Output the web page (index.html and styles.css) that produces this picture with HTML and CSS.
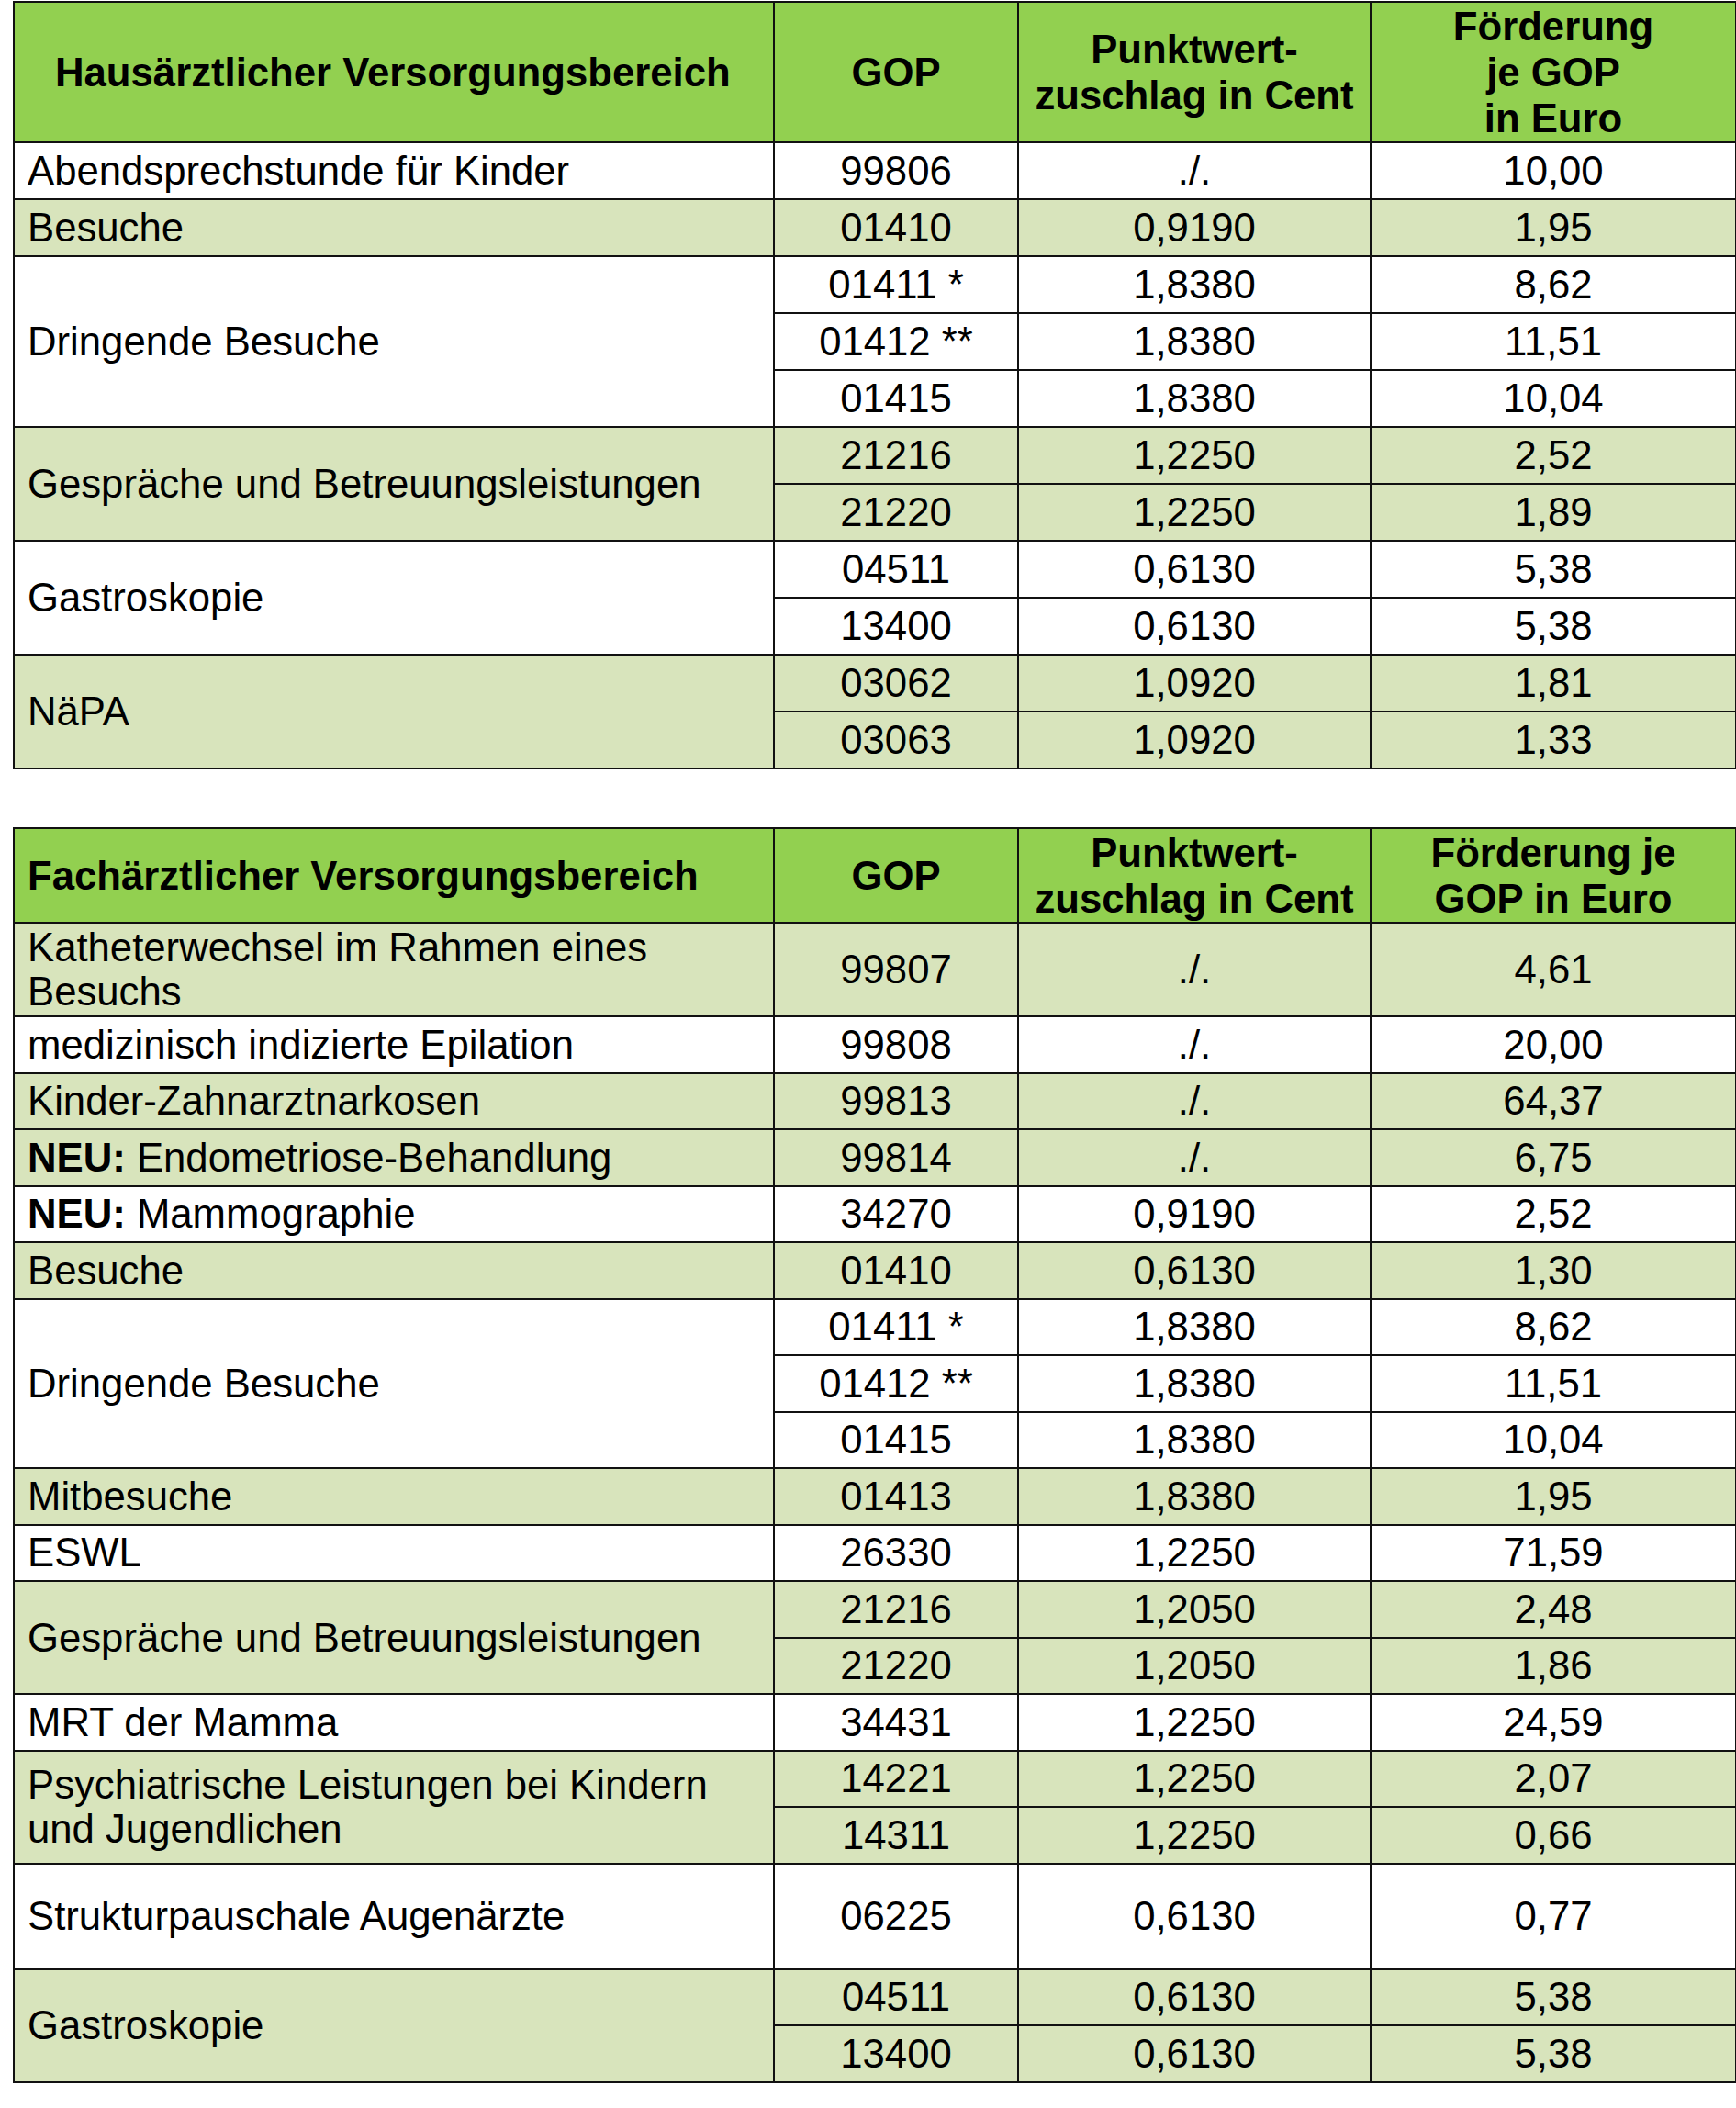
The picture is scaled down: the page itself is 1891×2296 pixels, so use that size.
FILE: index.html
```html
<!DOCTYPE html>
<html lang="de">
<head>
<meta charset="utf-8">
<title>Förderung je GOP</title>
<link rel="stylesheet" href="styles.css">
</head>
<body>
<div class="page">
  <table class="tbl tbl-haus">
    <colgroup>
      <col class="c1"><col class="c2"><col class="c3"><col class="c4">
    </colgroup>
    <thead>
      <tr class="head head-3">
        <th class="first center-name">Hausärztlicher Versorgungsbereich</th>
        <th>GOP</th>
        <th>Punktwert-<br>zuschlag in Cent</th>
        <th>Förderung<br>je GOP<br>in Euro</th>
      </tr>
    </thead>
    <tbody>
      <tr class="r w"><td class="first">Abendsprechstunde für Kinder</td><td>99806</td><td>./.</td><td>10,00</td></tr>
      <tr class="r g"><td class="first">Besuche</td><td>01410</td><td>0,9190</td><td>1,95</td></tr>
      <tr class="r w"><td class="first" rowspan="3">Dringende Besuche</td><td>01411 *</td><td>1,8380</td><td>8,62</td></tr>
      <tr class="r w"><td>01412 **</td><td>1,8380</td><td>11,51</td></tr>
      <tr class="r w"><td>01415</td><td>1,8380</td><td>10,04</td></tr>
      <tr class="r g"><td class="first" rowspan="2">Gespräche und Betreuungsleistungen</td><td>21216</td><td>1,2250</td><td>2,52</td></tr>
      <tr class="r g"><td>21220</td><td>1,2250</td><td>1,89</td></tr>
      <tr class="r w"><td class="first" rowspan="2">Gastroskopie</td><td>04511</td><td>0,6130</td><td>5,38</td></tr>
      <tr class="r w"><td>13400</td><td>0,6130</td><td>5,38</td></tr>
      <tr class="r g"><td class="first" rowspan="2">NäPA</td><td>03062</td><td>1,0920</td><td>1,81</td></tr>
      <tr class="r g"><td>03063</td><td>1,0920</td><td>1,33</td></tr>
    </tbody>
  </table>

  <table class="tbl tbl-fach">
    <colgroup>
      <col class="c1"><col class="c2"><col class="c3"><col class="c4">
    </colgroup>
    <thead>
      <tr class="head head-2">
        <th class="first">Fachärztlicher Versorgungsbereich</th>
        <th>GOP</th>
        <th>Punktwert-<br>zuschlag in Cent</th>
        <th>Förderung je<br>GOP in Euro</th>
      </tr>
    </thead>
    <tbody>
      <tr class="r2 g"><td class="first">Katheterwechsel im Rahmen eines<br>Besuchs</td><td>99807</td><td>./.</td><td>4,61</td></tr>
      <tr class="r w"><td class="first">medizinisch indizierte Epilation</td><td>99808</td><td>./.</td><td>20,00</td></tr>
      <tr class="r g"><td class="first">Kinder-Zahnarztnarkosen</td><td>99813</td><td>./.</td><td>64,37</td></tr>
      <tr class="r g"><td class="first"><strong>NEU:</strong> Endometriose-Behandlung</td><td>99814</td><td>./.</td><td>6,75</td></tr>
      <tr class="r w"><td class="first"><strong>NEU:</strong> Mammographie</td><td>34270</td><td>0,9190</td><td>2,52</td></tr>
      <tr class="r g"><td class="first">Besuche</td><td>01410</td><td>0,6130</td><td>1,30</td></tr>
      <tr class="r w"><td class="first" rowspan="3">Dringende Besuche</td><td>01411 *</td><td>1,8380</td><td>8,62</td></tr>
      <tr class="r w"><td>01412 **</td><td>1,8380</td><td>11,51</td></tr>
      <tr class="r w"><td>01415</td><td>1,8380</td><td>10,04</td></tr>
      <tr class="r g"><td class="first">Mitbesuche</td><td>01413</td><td>1,8380</td><td>1,95</td></tr>
      <tr class="r w"><td class="first">ESWL</td><td>26330</td><td>1,2250</td><td>71,59</td></tr>
      <tr class="r g"><td class="first" rowspan="2">Gespräche und Betreuungsleistungen</td><td>21216</td><td>1,2050</td><td>2,48</td></tr>
      <tr class="r g"><td>21220</td><td>1,2050</td><td>1,86</td></tr>
      <tr class="r w"><td class="first">MRT der Mamma</td><td>34431</td><td>1,2250</td><td>24,59</td></tr>
      <tr class="r g"><td class="first" rowspan="2">Psychiatrische Leistungen bei Kindern<br>und Jugendlichen</td><td>14221</td><td>1,2250</td><td>2,07</td></tr>
      <tr class="r g"><td>14311</td><td>1,2250</td><td>0,66</td></tr>
      <tr class="rt w"><td class="first">Strukturpauschale Augenärzte</td><td>06225</td><td>0,6130</td><td>0,77</td></tr>
      <tr class="r g"><td class="first" rowspan="2">Gastroskopie</td><td>04511</td><td>0,6130</td><td>5,38</td></tr>
      <tr class="r g"><td>13400</td><td>0,6130</td><td>5,38</td></tr>
    </tbody>
  </table>
</div>
</body>
</html>
```

FILE: styles.css
```css
html, body {
  margin: 0;
  padding: 0;
  background: #ffffff;
}

.page {
  padding: 1px 0 0 14px;
  display: flex;
  flex-direction: column;
  gap: 63px;
  align-items: flex-start;
}

.tbl {
  border-collapse: collapse;
  table-layout: fixed;
  width: 1876px;
  font-family: "Liberation Sans", Arial, sans-serif;
  font-size: 43.7px;
  color: #000;
}

.c1 { width: 828px; }
.c2 { width: 266px; }
.c3 { width: 384px; }
.c4 { width: 398px; }

.tbl th,
.tbl td {
  border: 2px solid #111;
  padding: 0 4px;
  text-align: center;
  vertical-align: middle;
  line-height: 48px;
  white-space: nowrap;
}

.tbl th {
  background: #92d050;
  font-weight: bold;
  line-height: 50px;
}

.tbl .first {
  text-align: left;
  padding-left: 14px;
}

.tbl th.center-name {
  padding-left: 44px;
}

.head-3 { height: 153px; }
.head-2 { height: 103px; }
.r { height: 62px; }
.tbl-fach .r { height: 61.5px; }
.r2 { height: 102px; }
.rt { height: 115px; }

.g td { background: #d8e4bc; }
.w td { background: #ffffff; }

.tbl strong { font-weight: bold; }
```
